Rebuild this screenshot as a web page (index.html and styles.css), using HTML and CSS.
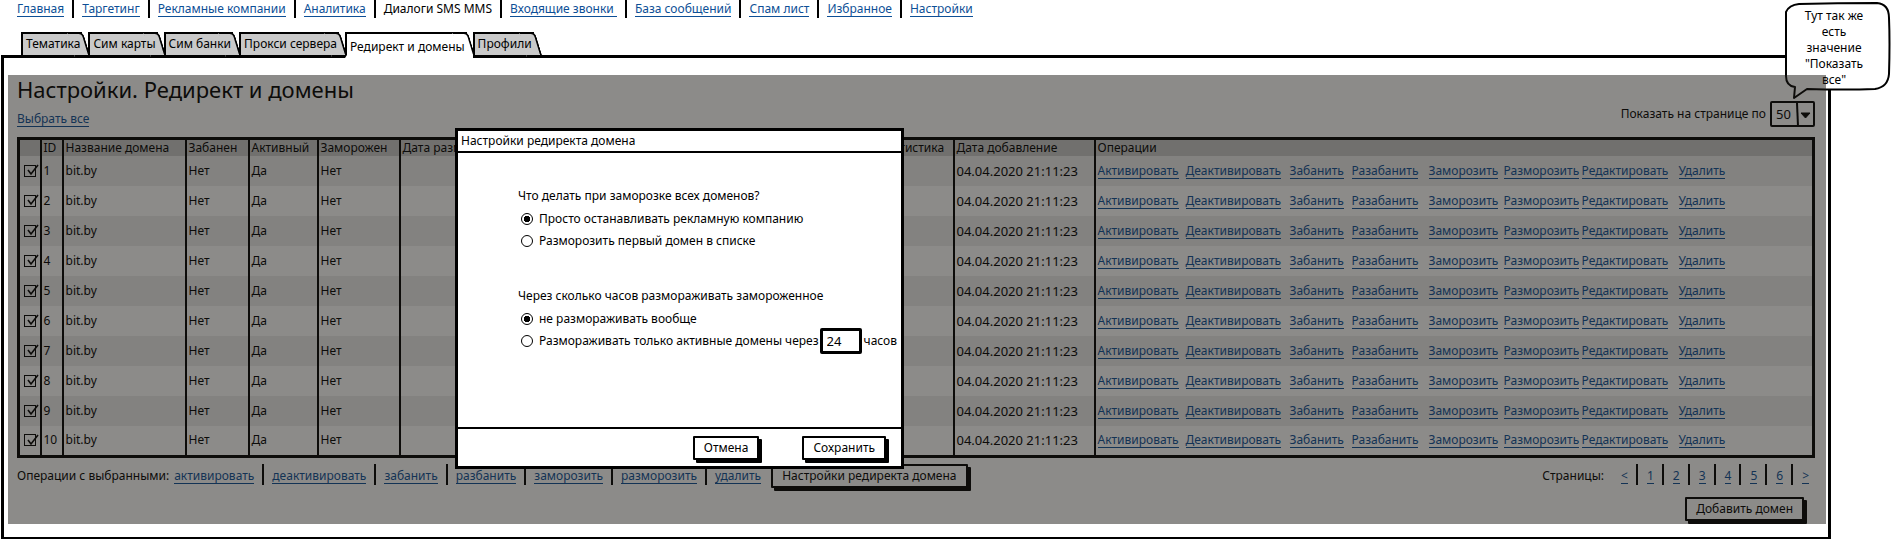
FILE: index.html
```html
<!DOCTYPE html>
<html lang="ru">
<head>
<meta charset="utf-8">
<title>Настройки. Редирект и домены</title>
<link rel="stylesheet" href="styles.css">
</head>
<body>
<nav class="links main-nav">
  <a href="#">Главная</a>
  <a href="#">Таргетинг</a>
  <a href="#">Рекламные компании</a>
  <a href="#">Аналитика</a>
  <span class="current">Диалоги SMS MMS</span>
  <a href="#">Входящие звонки&nbsp;</a>
  <a href="#">База сообщений</a>
  <a href="#">Спам лист</a>
  <a href="#">Избранное</a>
  <a href="#">Настройки</a>
</nav>

<div class="page">
  <div class="tabs" role="tablist">
    <button class="tab" role="tab"><span>Тематика</span></button>
    <button class="tab" role="tab"><span>Сим карты</span></button>
    <button class="tab" role="tab"><span>Сим банки</span></button>
    <button class="tab" role="tab"><span>Прокси сервера</span></button>
    <button class="tab active" role="tab" aria-selected="true"><span>Редирект и домены</span></button>
    <button class="tab" role="tab"><span>Профили</span></button>
  </div>

  <main class="panel">
    <div class="content">
      <h1>Настройки. Редирект и домены</h1>
      <div class="toolbar">
        <a href="#">Выбрать все</a>
        <div class="per-page">
          <label for="per-page">Показать на странице по</label>
          <div class="select">
            <select id="per-page"><option>50</option><option>100</option></select>
            <svg viewBox="0 0 17 23" width="17" height="23" aria-hidden="true"><path d="M1 0 L2 23" stroke="#000" stroke-width="2"/><path d="M5 10 H14 L9.500 15 Z" fill="#000" stroke="#000" stroke-linejoin="round"/></svg>
          </div>
          <div class="callout">
            <svg viewBox="0 0 106 100" width="106" height="100" aria-hidden="true"><path d="M14 2 Q52 1 92 1 Q104 2 104 16 Q105 40 104 72 Q103 85 90 87 Q60 88 22 87 L9 96 L10 85 Q1 84 1 74 V10 Q4 3 14 2 Z" fill="#fff" stroke="#000" stroke-width="2" stroke-linejoin="round"/></svg>
            <p>Тут так же есть значение "Показать все"</p>
          </div>
        </div>
      </div>

      <table class="domains">
        <colgroup>
          <col class="c-check"><col class="c-id"><col class="c-name"><col class="c-ban"><col class="c-active"><col class="c-frozen"><col class="c-date"><col class="c-stat"><col class="c-added"><col>
        </colgroup>
        <thead>
          <tr><th></th><th>ID</th><th>Название домена</th><th>Забанен</th><th>Активный</th><th>Заморожен</th><th>Дата разморозки</th><th>Статистика</th><th>Дата добавление</th><th>Операции</th></tr>
        </thead>
        <tbody id="rows"></tbody>
      </table>

      <div class="bulk">
        <span>Операции с выбранными:</span>
        <div class="links">
          <a href="#">активировать</a>
          <a href="#">деактивировать</a>
          <a href="#">забанить</a>
          <a href="#">разбанить</a>
          <a href="#">заморозить</a>
          <a href="#">разморозить</a>
          <a href="#">удалить</a>
        </div>
        <button class="btn">Настройки редиректа домена</button>
        <span class="pages-label">Страницы:</span>
        <nav class="links pager">
          <a href="#">&lt;</a>
          <a href="#">1</a>
          <a href="#">2</a>
          <a href="#">3</a>
          <a href="#">4</a>
          <a href="#">5</a>
          <a href="#">6</a>
          <a href="#">&gt;</a>
        </nav>
      </div>
      <div class="add"><button class="btn">Добавить домен</button></div>
      <div class="overlay"></div>
    </div>

    <form class="modal" role="dialog" aria-labelledby="modal-title">
      <h2 id="modal-title">Настройки редиректа домена</h2>
      <div class="modal-body">
        <fieldset>
          <legend>Что делать при заморозке всех доменов?</legend>
          <label><input type="radio" name="freeze" checked> Просто останавливать рекламную компанию</label>
          <label><input type="radio" name="freeze"> Разморозить первый домен в списке</label>
        </fieldset>
        <fieldset>
          <legend>Через сколько часов размораживать замороженное</legend>
          <label><input type="radio" name="hours" checked> не размораживать вообще</label>
          <div class="hours-row">
            <label><input type="radio" name="hours"> Размораживать только активные домены через</label>
            <input class="hours" id="hours" type="text" value="24">
            <label for="hours">часов</label>
          </div>
        </fieldset>
      </div>
      <div class="modal-foot">
        <button class="btn" type="button">Отмена</button>
        <button class="btn" type="button">Сохранить</button>
      </div>
    </form>
  </main>
</div>
<script src="rows.js"></script>
</body>
</html>
```
FILE: rows.js
```javascript
const operations = ["Активировать", "Деактивировать", "Забанить", "Разабанить", "Заморозить", "Разморозить", "Редактировать", "Удалить"];
const links = operations.map((name) => `<a href="#">${name}</a>`).join("");
const domains = Array.from({ length: 10 }, (_, i) => ({ id: i + 1, name: "bit.by", banned: "Нет", active: "Да", frozen: "Нет", added: "04.04.2020 21:11:23" }));

document.getElementById("rows").innerHTML = domains.map((d) => `
  <tr>
    <td><input class="check" type="checkbox" checked aria-label="Выбрать ${d.id}"><svg class="mark" viewBox="0 0 14 13" width="14" height="13" aria-hidden="true"><path d="M3 6 L6 10 L13 1" fill="none" stroke="#000" stroke-width="1.6"/></svg></td>
    <td>${d.id}</td><td>${d.name}</td><td>${d.banned}</td><td>${d.active}</td><td>${d.frozen}</td><td></td><td></td>
    <td class="date">${d.added}</td>
    <td><div class="ops">${links}</div></td>
  </tr>`).join("");
```
FILE: styles.css
```css
* {
  box-sizing: border-box;
}

body {
  margin: 0;
  background: #fff;
  color: #000;
  font: 12px/16px "Noto Sans", "Open Sans", sans-serif;
}

button,
input,
select {
  font: inherit;
  color: inherit;
}

a {
  color: #0d4f96;
  text-decoration: none;
  border-bottom: 1px solid currentColor;
  line-height: 15px;
  white-space: nowrap;
}

h1 {
  margin: 0;
  font-size: 22px;
  font-weight: 400;
  line-height: 28px;
}

/* Link rows split by vertical bars */
.links {
  display: flex;
}

.links > * {
  position: relative;
  margin-right: 18px;
}

.links > *:last-child {
  margin-right: 0;
}

.links > *:not(:last-child)::after {
  content: "";
  position: absolute;
  right: -10px;
  top: -4px;
  width: 2px;
  height: 21px;
  background: #000;
}

.main-nav {
  padding: 1px 17px 0;
}

.page {
  position: relative;
  margin: 15px 60px 0 0;
}

/* Tabs */
.tabs {
  position: relative;
  z-index: 1;
  display: flex;
  padding-left: 21px;
  margin-bottom: -3px;
}

.tab {
  position: relative;
  height: 26px;
  margin-right: -2px;
  padding: 0 10px 2px 5px;
  border: 0;
  background: none;
  line-height: 20px;
  white-space: nowrap;
}

.tab::before,
.tab::after {
  content: "";
  position: absolute;
  top: 0;
  bottom: 0;
  background: #c9c9c9;
  border: solid #000;
}

.tab::before {
  left: 0;
  right: 8px;
  border-width: 2px 0 3px 2px;
}

.tab::after {
  right: 3px;
  width: 14px;
  border-width: 2px 2px 3px 0;
  border-top-right-radius: 5px;
  transform: skewX(17deg);
}

.tab span {
  position: relative;
  z-index: 1;
}

.tab.active {
  padding: 4px 10px 0 5px;
}

.tab.active::before,
.tab.active::after {
  background: #fff;
  border-bottom-color: #fff;
}

/* Panel */
.panel {
  position: relative;
  margin-left: 1px;
  padding: 17px 2px 13px 4px;
  border: 3px solid #000;
}

.content {
  position: relative;
  padding: 0 11px 1px 9px;
}

.overlay {
  position: absolute;
  inset: 0;
  background: rgba(26, 24, 20, 0.5);
}

.toolbar {
  display: flex;
  justify-content: space-between;
  align-items: center;
  height: 22px;
}

.toolbar > a {
  margin-top: 10px;
}

.per-page {
  position: relative;
  display: flex;
  align-items: center;
  gap: 4px;
}

.select {
  position: relative;
  height: 26px;
  border: 2px solid #000;
  border-radius: 2px;
}

.select select {
  width: 41px;
  height: 22px;
  padding: 0 0 0 4px;
  border: 0;
  background: none;
  appearance: none;
  font-size: 13px;
}

.select svg {
  position: absolute;
  right: 0;
  top: 0;
  pointer-events: none;
}

.callout {
  position: absolute;
  right: -76px;
  bottom: 25px;
  width: 106px;
  height: 100px;
}

.callout svg {
  position: absolute;
  inset: 0;
}

.callout p {
  position: relative;
  margin: 0;
  padding: 6px 18px 0 10px;
  text-align: center;
}

/* Domains table */
.domains {
  width: 100%;
  margin-top: 12px;
  table-layout: fixed;
  border-collapse: collapse;
  border: 3px solid #000;
}

.c-check { width: 22px; }
.c-id { width: 22px; }
.c-name { width: 123px; }
.c-ban { width: 63px; }
.c-active { width: 69px; }
.c-frozen { width: 82px; }
.c-date { width: 477px; }
.c-stat { width: 77px; }
.c-added { width: 141px; }

.domains th,
.domains td {
  padding: 0 2px;
  border-left: 2px solid #000;
  font-weight: 400;
  text-align: left;
  white-space: nowrap;
}

.domains th {
  height: 17px;
  line-height: 16px;
  background: #c9c9c9;
}

.domains td {
  height: 30px;
}

.domains tbody tr:nth-child(odd) {
  background: #ececec;
}

.domains td:first-child {
  position: relative;
  padding-left: 4px;
}

.domains .date {
  font-size: 13px;
}

.check {
  display: block;
  appearance: none;
  width: 12px;
  height: 12px;
  margin: 0;
  border: 1px solid #000;
}

.mark {
  position: absolute;
  left: 5px;
  top: 8px;
  pointer-events: none;
}

.ops {
  display: grid;
  grid-template-columns: 88px 104px 62px 77px 75px 78px 97px auto;
  justify-content: start;
  justify-items: start;
}

/* Row below the table */
.bulk {
  display: flex;
  align-items: center;
  height: 35px;
  padding-top: 2px;
}

.bulk > .links {
  margin-left: 5px;
}

.bulk .btn {
  margin-left: 10px;
}

.bulk .pages-label {
  margin-left: auto;
}

.bulk > .pager {
  margin: 0 6px 0 17px;
}

.bulk > .pager > *:not(:last-child) {
  margin-right: 19px;
}

.btn {
  height: 24px;
  padding: 0 9px;
  border: 2px solid #000;
  border-radius: 1px;
  background: #fff;
  box-shadow: 3px 3px 0 #000;
  line-height: 18px;
  white-space: nowrap;
}

.add {
  display: flex;
  justify-content: flex-end;
  padding: 4px 11px 2px 0;
}

/* Modal */
.modal {
  position: absolute;
  left: 451px;
  top: 70px;
  width: 449px;
  border: 3px solid #000;
  background: #fff;
}

.modal h2 {
  margin: 0;
  padding: 0 3px;
  height: 22px;
  border-bottom: 2px solid #000;
  font-size: 12px;
  font-weight: 400;
  line-height: 20px;
}

.modal-body {
  display: flex;
  flex-direction: column;
  gap: 36px;
  height: 274px;
  padding: 35px 0 0 60px;
}

.modal fieldset {
  margin: 0;
  padding: 0;
  border: 0;
}

.modal legend {
  padding: 0;
  margin-bottom: 4px;
}

.modal label {
  display: flex;
  align-items: center;
  height: 22px;
  white-space: nowrap;
}

.modal input[type="radio"] {
  appearance: none;
  flex: none;
  width: 12px;
  height: 12px;
  margin: 0 6px 0 3px;
  border: 1px solid #000;
  border-radius: 50%;
}

.modal input[type="radio"]:checked {
  background: radial-gradient(circle, #000 0 3px, #fff 3px);
}

.hours-row {
  display: flex;
  align-items: center;
  height: 22px;
}

.hours {
  width: 42px;
  height: 26px;
  margin: 0 2px 0 1px;
  padding: 0 4px;
  border: 3px solid #000;
  border-radius: 2px;
  font-size: 13px;
}

.modal-foot {
  display: flex;
  justify-content: flex-end;
  gap: 43px;
  height: 39px;
  padding: 7px 15px 0 0;
  border-top: 2px solid #000;
}
```
